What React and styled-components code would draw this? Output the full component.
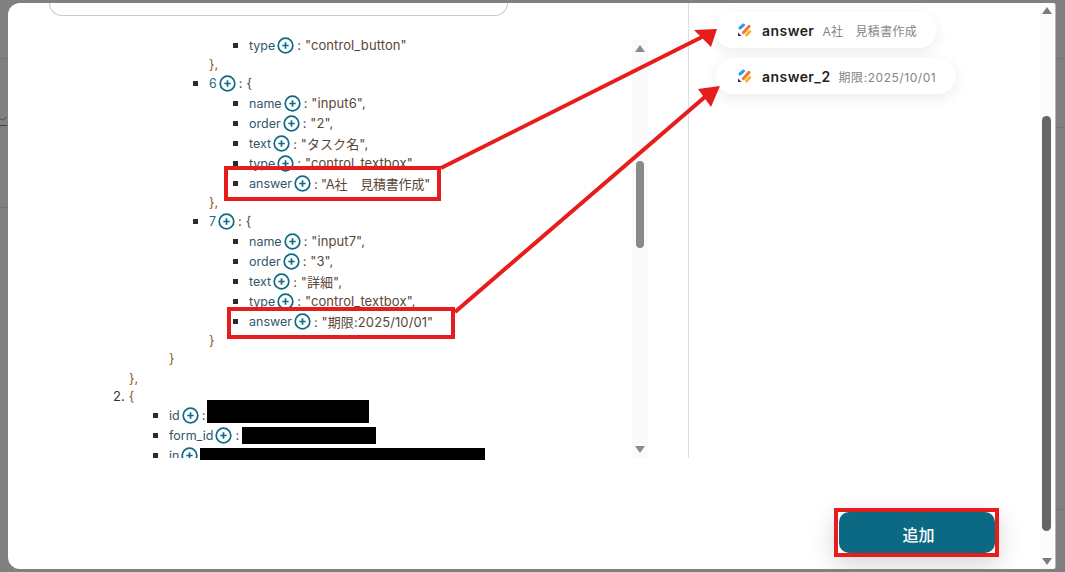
import React from "react";
import styled, { createGlobalStyle } from "styled-components";

const Global = createGlobalStyle`
  html, body { margin: 0; padding: 0; height: 100%; overflow: hidden; background: #808080; }
  #root { height: 100%; }
  * { box-sizing: border-box; }
`;

const Page = styled.div`
  position: relative;
  width: 1065px;
  height: 572px;
  background: #808080;
  overflow: hidden;
  padding: 3px 10px 3px 8px;
  font-family: Inter, "Noto Sans CJK JP", sans-serif;
`;
const BackLine = styled.div`
  position: absolute;
  height: 1px;
  background: ${p => p.$color || "#737373"};
  left: ${p => p.$left}px;
  width: ${p => p.$width}px;
  top: ${p => p.$top}px;
`;
const BackMark = styled.svg`
  position: absolute;
  left: 0;
  top: 114px;
`;
const Modal = styled.div`
  position: relative;
  height: 566px;
  background: #fff;
  border-radius: 12px 2px 2px 12px;
  box-shadow: 1px 0 0 #b5b5b5;
  display: flex;
  overflow: hidden;
`;
const Main = styled.div`
  flex: 1;
  min-width: 0;
  display: flex;
  flex-direction: column;
`;
const Body = styled.div`
  display: flex;
  height: 455px;
`;
const LeftPane = styled.div`
  width: 681px;
  flex: none;
  display: flex;
  flex-direction: column;
  border-right: 1px solid #dedede;
`;
const SearchBox = styled.div`
  width: 459px;
  height: 13px;
  margin-left: 41px;
  flex: none;
  border: 1px solid #c9c9c9;
  border-top: 0;
  border-radius: 0 0 14px 14px;
`;
const TreeArea = styled.div`
  flex: 1;
  min-height: 0;
  display: flex;
`;
const Tree = styled.div`
  width: 624px;
  flex: none;
  padding-top: 19px;
  overflow: hidden;
  font-size: 13px;
  display: flex;
  flex-direction: column;
`;
const Row = styled.div`
  display: flex;
  align-items: center;
  flex: none;
  height: ${p => (p.$brace ? 18 : 20)}px;
  margin-top: ${p => p.$gap || 0}px;
  padding-left: ${p => p.$x}px;
  white-space: nowrap;
`;
const Bullet = styled.span`
  width: 5px;
  height: 5px;
  background: #2b2b2b;
  margin-right: 11px;
  margin-left: -16px;
  flex: none;
`;
const Key = styled.span`
  color: ${p => (p.$index ? "#1f6f8a" : "#33566a")};
  font-size: 12.5px;
`;
const Value = styled.span`
  color: #5a4636;
  margin-left: 1px;
  letter-spacing: ${p => (p.$tight ? -0.2 : 0.1)}px;
`;
const Punct = styled.span`
  color: #8a5a2a;
`;
const Index = styled.span`
  color: #333;
  margin-right: 4px;
`;
const Plus = styled.svg`
  width: 17px;
  height: 17px;
  margin: 1px 2px 0 2px;
  flex: none;
`;
const Redacted = styled.span`
  position: absolute;
  background: #000;
  left: ${p => p.$x}px;
  top: ${p => p.$y}px;
  width: ${p => p.$w}px;
  height: ${p => p.$h}px;
`;
const ListScroll = styled.div`
  position: relative;
  width: 16px;
  flex: none;
  margin-top: 24px;
  background: #fafafa;
`;
const ModalScroll = styled.div`
  position: relative;
  width: 13px;
  flex: none;
  margin-right: 2px;
  background: #fcfcfc;
`;
const Thumb = styled.div`
  position: absolute;
  left: ${p => p.$inset}px;
  right: ${p => p.$inset}px;
  top: ${p => p.$top}px;
  height: ${p => p.$height}px;
  background: ${p => p.$color};
  border-radius: 5px;
`;
const Arrow = styled.div`
  position: absolute;
  left: 50%;
  transform: translateX(-50%);
  width: 0;
  height: 0;
  border-left: 5px solid transparent;
  border-right: 5px solid transparent;
  ${p => p.$down
    ? `bottom: ${p.$gap}px; border-top: 7px solid ${p.$color};`
    : `top: ${p.$gap}px; border-bottom: 7px solid ${p.$color};`}
`;
const RightPane = styled.div`
  flex: 1;
  display: flex;
  flex-direction: column;
  align-items: flex-start;
  gap: 10px;
  padding: 9px 0 0 26px;
`;
const Chip = styled.div`
  height: 36px;
  display: flex;
  align-items: center;
  padding: 0 20px 0 22px;
  border-radius: 18px;
  background: #fff;
  box-shadow: 0 4px 14px rgba(0, 0, 0, 0.08);
  white-space: nowrap;
`;
const ChipName = styled.span`
  font-size: 14px;
  font-weight: 600;
  color: #222;
  margin-left: 10px;
  letter-spacing: 0.45px;
`;
const ChipValue = styled.span`
  font-size: 12px;
  color: #858585;
  margin-left: 8px;
  letter-spacing: ${p => p.$spacing}px;
`;
const Footer = styled.div`
  flex: 1;
  display: flex;
  justify-content: flex-end;
  align-items: flex-end;
  padding: 0 41px 12px 0;
`;
const AddOutline = styled.div`
  border: 4px solid #e71c1c;
  width: 165px;
  height: 49px;
  padding-left: 1px;
  background: #fff;
  box-shadow: 0 8px 24px rgba(0, 0, 0, 0.16);
`;
const AddButton = styled.button`
  display: block;
  width: 100%;
  height: 100%;
  margin: 0;
  padding: 2px 0 0 3px;
  border: 0;
  background: #0b6983;
  color: #fff;
  font-family: inherit;
  font-size: 16px;
  font-weight: 500;
  border-radius: 10px;
`;
const Overlay = styled.svg`
  position: absolute;
  left: 0;
  top: 0;
  pointer-events: none;
`;

function PlusIcon() {
  return (
    <Plus viewBox="0 0 17 17">
      <circle cx="8.5" cy="8.5" r="7.3" fill="#fff" stroke="#0f6b85" strokeWidth="1.7" />
      <path d="M8.5 5.3v6.4M5.3 8.5h6.4" stroke="#0f6b85" strokeWidth="1.7" />
    </Plus>
  );
}

function Line({ x, name, value, index, tight }) {
  return (
    <Row $x={x}>
      <Bullet />
      <Key $index={index}>{name}</Key>
      <PlusIcon />
      <Value $tight={tight}>: {value}</Value>
    </Row>
  );
}

function Brace({ x, gap, children }) {
  return (
    <Row $brace $x={x} $gap={gap}>
      <Punct>{children}</Punct>
    </Row>
  );
}

function AppLogo() {
  return (
    <svg width="15" height="15" viewBox="0 0 15 15">
      <path d="M3 5 6.5 2" stroke="#2d9cf0" strokeWidth="3" strokeLinecap="round" />
      <path d="M6.5 9.5 12 3.5" stroke="#f5792a" strokeWidth="3.2" strokeLinecap="round" />
      <path d="M9.5 12 12.8 8.5" stroke="#f9b233" strokeWidth="3" strokeLinecap="round" />
      <path d="M1 13h3.6L1 9.6z" fill="#27306b" />
    </svg>
  );
}

export default function App() {
  return (
    <Page>
      <Global />
      <BackLine $left={0} $width={8} $top={58} />
      <BackLine $left={0} $width={7} $top={125} $color="#3f3f3f" />
      <BackLine $left={0} $width={8} $top={207} />
      <BackLine $left={1056} $width={9} $top={58} />
      <BackLine $left={1056} $width={9} $top={127} />
      <BackLine $left={1056} $width={9} $top={509} />
      <BackMark width="8" height="8" viewBox="0 0 8 8">
        <path d="M0 5 3 6 7 3" fill="none" stroke="#4a5560" strokeWidth="1" />
      </BackMark>
      <Modal>
        <Main>
          <Body>
            <LeftPane>
              <SearchBox />
              <TreeArea>
                <Tree>
                  <Line x={241} name="type" value={'"control_button"'} />
                  <Brace x={201}>{"},"}</Brace>
                  <Line x={201} index name="6" value="{" />
                  <Line x={241} name="name" value={'"input6",'} />
                  <Line x={241} name="order" value={'"2",'} />
                  <Line x={241} name="text" value={'"タスク名",'} />
                  <Line x={241} name="type" value={'"control_textbox",'} />
                  <Line x={241} tight name="answer" value={'"A社　見積書作成"'} />
                  <Brace x={201}>{"},"}</Brace>
                  <Line x={201} index name="7" value="{" />
                  <Line x={241} name="name" value={'"input7",'} />
                  <Line x={241} name="order" value={'"3",'} />
                  <Line x={241} name="text" value={'"詳細",'} />
                  <Line x={241} name="type" value={'"control_textbox",'} />
                  <Line x={241} name="answer" value={'"期限:2025/10/01"'} />
                  <Brace x={201}>{"}"}</Brace>
                  <Brace x={161}>{"}"}</Brace>
                  <Brace x={121} gap={2}>{"},"}</Brace>
                  <Row $brace $x={105}>
                    <Index>2.</Index>
                    <Punct>{"{"}</Punct>
                  </Row>
                  <Line x={161} name="id" value="" />
                  <Line x={161} name="form_id" value="" />
                  <Line x={161} name="in" value="" />
                </Tree>
                <ListScroll>
                  <Arrow $color="#8a8a8a" $gap={5} />
                  <Thumb $inset={4} $top={121} $height={87} $color="#8a8a8a" />
                  <Arrow $down $color="#8a8a8a" $gap={5} />
                </ListScroll>
              </TreeArea>
            </LeftPane>
            <RightPane>
              <Chip>
                <AppLogo />
                <ChipName>answer</ChipName>
                <ChipValue $spacing={0.3}>A社　見積書作成</ChipValue>
              </Chip>
              <Chip>
                <AppLogo />
                <ChipName>answer_2</ChipName>
                <ChipValue $spacing={0.55}>期限:2025/10/01</ChipValue>
              </Chip>
            </RightPane>
          </Body>
          <Footer>
            <AddOutline>
              <AddButton>追加</AddButton>
            </AddOutline>
          </Footer>
        </Main>
        <ModalScroll>
          <Arrow $color="#7c7c7c" $gap={4} />
          <Thumb $inset={2} $top={113} $height={415} $color="#666" />
          <Arrow $down $color="#7c7c7c" $gap={4} />
        </ModalScroll>
      </Modal>
      <Redacted $x={207} $y={400} $w={162} $h={23} />
      <Redacted $x={242} $y={427} $w={134} $h={17} />
      <Redacted $x={200} $y={448} $w={285} $h={12} />
      <Overlay width="1065" height="572" viewBox="0 0 1065 572">
        <rect x="226" y="168" width="213" height="31" fill="none" stroke="#e71c1c" strokeWidth="4" />
        <rect x="229" y="309" width="224" height="28" fill="none" stroke="#e71c1c" strokeWidth="4" />
        <path d="M441 168 702 37" stroke="#e71c1c" strokeWidth="4" />
        <path d="M694 30 717 29 711 47z" fill="#e71c1c" />
        <path d="M455 312 706 96" stroke="#e71c1c" strokeWidth="4" />
        <path d="M698 89 720 86 711 107z" fill="#e71c1c" />
      </Overlay>
    </Page>
  );
}
